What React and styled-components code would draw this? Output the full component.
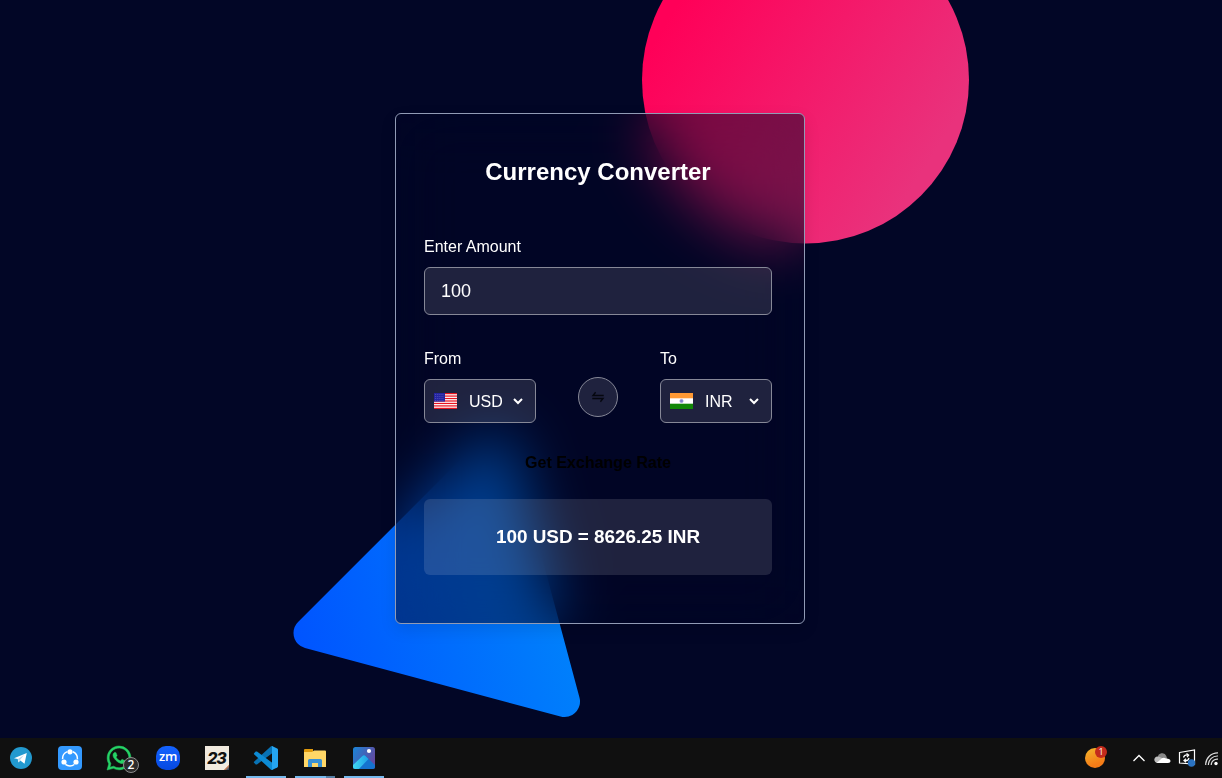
import React from "react";
import styled, { createGlobalStyle } from "styled-components";

const GlobalStyle = createGlobalStyle`
  * { box-sizing: border-box; }
  body { margin: 0; background: #020626; font-family: "Liberation Sans", Arial, sans-serif; color: #fff; overflow: hidden; }
`;

const Screen = styled.div`
  display: flex;
  flex-direction: column;
  width: 1222px;
  height: 778px;
  overflow: hidden;
`;

const Stage = styled.main`
  position: relative;
  flex: 1;
  padding: 113px 0 0 395px;
  background: #020626;
`;

const Shapes = styled.svg`
  position: absolute;
  inset: 0;
  width: 1222px;
  height: 738px;
`;

const Card = styled.section`
  position: relative;
  display: flex;
  flex-direction: column;
  width: 410px;
  height: 511px;
  padding: 42px 32px 0 28px;
  border: 1px solid #919bb5;
  border-radius: 6px;
  background: rgba(0, 4, 36, 0.5);
  backdrop-filter: blur(30px);
  box-shadow: 0 6px 16px rgba(0, 0, 0, 0.1);
`;

const Title = styled.h1`
  margin: 0 0 49px;
  font-size: 24px;
  line-height: 32px;
  text-align: center;
`;

const Label = styled.label`
  display: block;
  font-size: 16px;
  line-height: 20px;
`;

const Field = styled.div`
  display: flex;
  align-items: center;
  height: 48px;
  margin: 10px 0 34px;
  padding: 0 16px;
  border: 1px solid #868897;
  border-radius: 6px;
  background: rgba(255, 255, 255, 0.12);
  font-size: 18px;
`;

const Pair = styled.div`
  display: flex;
  justify-content: space-between;
`;

const Group = styled.div`
  display: flex;
  flex-direction: column;
  gap: 10px;
`;

const Select = styled.div`
  display: flex;
  align-items: center;
  width: 112px;
  height: 44px;
  padding: 0 11px 0 8px;
  border: 1px solid #868897;
  border-radius: 6px;
  background: rgba(255, 255, 255, 0.12);
  font-size: 16px;
`;

const Code = styled.span`
  padding-top: 2px;
`;

const Flag = styled.svg`
  width: 24px;
  height: 16px;
  margin-right: 12px;
`;

const Chevron = styled.svg`
  width: 12px;
  height: 8px;
  margin-left: auto;
`;

const Swap = styled.button`
  width: 40px;
  height: 40px;
  margin-top: 28px;
  padding: 0;
  border: 1px solid #868897;
  border-radius: 50%;
  background: rgba(255, 255, 255, 0.12);
  line-height: 0;
`;

const RateButton = styled.button`
  margin: 29px 0 26px;
  padding: 0;
  border: 0;
  background: none;
  color: #000;
  font: bold 16px/21px "Liberation Sans", Arial, sans-serif;
`;

const Result = styled.div`
  display: flex;
  align-items: center;
  justify-content: center;
  height: 76px;
  border-radius: 6px;
  background: rgba(255, 255, 255, 0.12);
  font-size: 18.9px;
  font-weight: bold;
`;

const Taskbar = styled.footer`
  display: flex;
  justify-content: space-between;
  height: 40px;
  background: #101010;
`;

const Apps = styled.div`
  display: flex;
  gap: 9px;
  padding-left: 1px;
`;

const TaskButton = styled.div`
  position: relative;
  display: flex;
  align-items: center;
  justify-content: center;
  width: 40px;
  height: 40px;
  border-bottom: 2px solid ${(p) => (p.$open ? "#76b9ed" : "transparent")};
  padding-top: 2px;
`;

const Stacked = styled.i`
  position: absolute;
  right: 0;
  bottom: -2px;
  width: 9px;
  height: 2px;
  background: #557fa5;
`;

const Icon = styled.svg`
  width: ${(p) => p.$w || 24}px;
  height: ${(p) => p.$h || p.$w || 24}px;
  overflow: visible;
`;

const Count = styled.span`
  position: absolute;
  left: 24px;
  top: 19px;
  width: 16px;
  height: 16px;
  border: 1px solid #8d8d8d;
  border-radius: 50%;
  background: #2c2c2c;
  font: 600 12px/14px "Open Sans", sans-serif;
  text-align: center;
`;

const Zoom = styled.div`
  display: flex;
  justify-content: center;
  width: 24px;
  height: 24px;
  border-radius: 10px;
  background: linear-gradient(#1463ff, #0748e0);
  font: 600 13px/21px "Open Sans", sans-serif;
  letter-spacing: -0.3px;
`;

const Day = styled.div`
  width: 24px;
  height: 24px;
  background: linear-gradient(135deg, #f1eadf 88%, #d08358 90%, #34506b 97%);
  color: #111;
  font: italic 800 16px/24px Inter, sans-serif;
  letter-spacing: -1.2px;
  text-indent: -1px;
  text-align: center;
`;

const Tray = styled.div`
  display: flex;
  align-items: center;
  width: 137px;
`;

const Weather = styled.div`
  position: relative;
  width: 20px;
  height: 20px;
  margin-right: 27px;
  border-radius: 50%;
  background: linear-gradient(160deg, #f3b72c, #f57c17 75%);
`;

const Alert = styled.span`
  position: absolute;
  left: 10px;
  top: -2px;
  width: 12px;
  height: 12px;
  border-radius: 50%;
  background: #c42b1c;
  font: 9px/12px "Open Sans", sans-serif;
  text-align: center;
`;

const TrayIcon = styled.svg`
  flex: none;
  width: ${(p) => p.$w}px;
  height: 18px;
  margin-right: ${(p) => p.$gap || 0}px;
`;

function Down() {
  return (
    <Chevron viewBox="0 0 12 8">
      <path d="M2 2 6 6l4-4" fill="none" stroke="#fff" strokeWidth="2" />
    </Chevron>
  );
}

function UsFlag() {
  return (
    <Flag viewBox="-1 0 24 16">
      <rect width="23" height="16" fill="#fff" />
      {[0, 1, 2, 3, 4, 5, 6].map((n) => (
        <rect key={n} y={n * 2.46} width="23" height="1.23" fill="#e8131f" />
      ))}
      <rect width="11" height="8.6" fill="#2424a0" />
      {[1.5, 3.5, 5.5, 7.5].map((y) => (
        <path key={y} d={`M1 ${y}h9.5`} stroke="#8585cf" strokeWidth=".6" strokeDasharray=".7 1.2" />
      ))}
    </Flag>
  );
}

function InFlag() {
  return (
    <Flag viewBox="-1 0 24 16">
      <rect width="23" height="16" fill="#fff" />
      <rect width="23" height="5.3" fill="#ff9933" />
      <rect y="10.7" width="23" height="5.3" fill="#128807" />
      <circle cx="11.5" cy="8" r="1.7" fill="#8080c8" stroke="#a0a0dc" strokeWidth=".6" />
    </Flag>
  );
}

export default function App() {
  return (
    <Screen>
      <GlobalStyle />
      <Stage>
        <Shapes viewBox="0 0 1222 738">
          <defs>
            <linearGradient id="pink" gradientUnits="userSpaceOnUse" x1="680" y1="0" x2="930" y2="160">
              <stop stopColor="#ff0058" />
              <stop offset="1" stopColor="#e9327c" />
            </linearGradient>
            <linearGradient id="blue" gradientUnits="userSpaceOnUse" x1="300" y1="640" x2="570" y2="560">
              <stop stopColor="#0055ff" />
              <stop offset="1" stopColor="#0084fb" />
            </linearGradient>
          </defs>
          <circle cx="805.5" cy="80" r="163.5" fill="url(#pink)" />
          <path d="M309 633 564.5 701.5 496 446Z" fill="url(#blue)" stroke="url(#blue)" strokeWidth="31" strokeLinejoin="round" />
        </Shapes>
        <Card>
          <Title>Currency Converter</Title>
          <Label>Enter Amount</Label>
          <Field>100</Field>
          <Pair>
            <Group>
              <Label>From</Label>
              <Select><UsFlag /><Code>USD</Code><Down /></Select>
            </Group>
            <Swap>
              <svg width="14" height="12" viewBox="0 0 14 12" fill="none" stroke="#05070f" strokeWidth="1.4">
                <path d="M12.7 4.5H2L4.6 1.2M1.3 7.5H12L9.4 10.8" />
              </svg>
            </Swap>
            <Group>
              <Label>To</Label>
              <Select><InFlag /><Code>INR</Code><Down /></Select>
            </Group>
          </Pair>
          <RateButton>Get Exchange Rate</RateButton>
          <Result>100 USD = 8626.25 INR</Result>
        </Card>
      </Stage>
      <Taskbar>
        <Apps>
          <TaskButton>
            <Icon $w={22} viewBox="0 0 22 22">
              <circle cx="11" cy="11" r="11" fill="#2299cf" />
              <path d="M4 11.2 16.8 6l-2.3 10.7-4.2-3.1-1.9 2-.7-3.5z" fill="#fff" />
              <path d="m8 12 6-4-4.2 5.2-.8 2z" fill="#b8d9ec" />
            </Icon>
          </TaskButton>
          <TaskButton>
            <Icon viewBox="0 0 24 24">
              <rect width="24" height="24" rx="4" fill="#3399ff" />
              <circle cx="12" cy="12.5" r="7.4" fill="none" stroke="#fff" strokeWidth="1.5" strokeDasharray="9.5 6" strokeDashoffset="-3" transform="rotate(-90 12 12.5)" />
              <g fill="#fff">
                <circle cx="12" cy="5.8" r="2.6" /><circle cx="6" cy="16" r="2.6" /><circle cx="18" cy="16" r="2.6" />
              </g>
            </Icon>
          </TaskButton>
          <TaskButton>
            <Icon viewBox="0 0 24 24">
              <path d="M17.47 14.38c-.3-.15-1.76-.87-2.03-.97-.27-.1-.47-.15-.67.15-.2.3-.77.97-.94 1.16-.17.2-.35.22-.64.08-.3-.15-1.26-.46-2.4-1.48-.88-.79-1.48-1.76-1.65-2.06-.17-.3-.02-.46.13-.6.13-.14.3-.35.45-.53.15-.17.2-.3.3-.5.1-.2.05-.37-.02-.52-.08-.15-.67-1.61-.92-2.21-.24-.58-.49-.5-.67-.51h-.57c-.2 0-.52.07-.79.37-.27.3-1.04 1.02-1.04 2.48s1.07 2.88 1.21 3.07c.15.2 2.1 3.2 5.08 4.49.71.3 1.26.49 1.69.63.71.22 1.36.19 1.87.11.57-.08 1.76-.72 2-1.41.25-.7.25-1.29.18-1.42-.07-.12-.27-.2-.57-.35zM12.05 21.79a9.87 9.87 0 0 1-5.03-1.38l-.36-.22-3.74.98 1-3.64-.24-.38a9.86 9.86 0 1 1 8.37 4.64zM20.46 3.49A11.82 11.82 0 0 0 12.05 0C5.5 0 .16 5.34.16 11.89c0 2.1.55 4.14 1.59 5.95L.06 24l6.3-1.65a11.88 11.88 0 0 0 5.69 1.45c6.55 0 11.89-5.34 11.89-11.9 0-3.17-1.24-6.16-3.48-8.41z" fill="#25d366" stroke="#25d366" strokeWidth=".5" />
            </Icon>
            <Count>2</Count>
          </TaskButton>
          <TaskButton><Zoom>zm</Zoom></TaskButton>
          <TaskButton><Day>23</Day></TaskButton>
          <TaskButton $open>
            <Icon viewBox="0 0 24 24">
              <path d="M0 15.7 17 .3q.8-.5 1.5-.2V7L3 18.4q-.7.4-1.3 0L.3 17q-.8-.6-.3-1.3z" fill="#0872b4" />
              <path d="M0 8.3Q-.4 7.6.3 7l1.4-1.4q.6-.4 1.3 0L18.5 17v6.9q-.7.3-1.5-.2z" fill="#0d8bd4" />
              <path d="M18 0l5.2 2.5q.8.4.8 1.3v16.4q0 .9-.8 1.3L18 24z" fill="#25a5f1" />
            </Icon>
          </TaskButton>
          <TaskButton $open>
            <Icon $w={22} $h={18} viewBox="0 0 22 18">
              <path d="M0 1q0-1 1-1h8v3H0z" fill="#e09a0c" />
              <path d="M0 3h8l2-1.5h11q1 0 1 1V18H0z" fill="#ffd767" />
              <path d="M4 18v-6.5Q4 10 5.5 10h11q1.500 0 1.500 1.500V18h-4v-4H8v4z" fill="#3a92d4" />
            </Icon>
            <Stacked />
          </TaskButton>
          <TaskButton $open>
            <Icon $w={22} viewBox="0 0 22 22">
              <defs>
                <linearGradient id="photo" x2="1" y2=".5"><stop stopColor="#1985d8" /><stop offset="1" stopColor="#624aa0" /></linearGradient>
                <linearGradient id="hill" x2="1" y2="0"><stop stopColor="#43dcf3" /><stop offset="1" stopColor="#1fa0e8" /></linearGradient>
                <clipPath id="frame"><rect width="22" height="22" rx="2.5" /></clipPath>
              </defs>
              <g clipPath="url(#frame)">
                <rect width="22" height="22" fill="url(#photo)" />
                <path d="M-1 20 9.5 9q1.500-1.500 3 0L23 19v4H-1z" fill="#1573cf" />
                <path d="M-1 19 9.5 9q1.500-1.500 3 0l3 3L5 23h-6z" fill="url(#hill)" />
                <circle cx="16" cy="4" r="2.1" fill="#fff" />
              </g>
            </Icon>
          </TaskButton>
        </Apps>
        <Tray>
          <Weather><Alert>1</Alert></Weather>
          <TrayIcon $w={14} $gap={8} viewBox="0 0 14 18">
            <path d="m1.5 12 5.5-5.5 5.5 5.5" fill="none" stroke="#fff" strokeWidth="1.3" />
          </TrayIcon>
          <TrayIcon $w={17} $gap={7} viewBox="0 0 17 18">
            <path d="M4 9a4.3 4.3 0 0 1 8.3-2l1.5 5H5z" fill="#888" />
            <path d="M3.7 14A3.3 3.3 0 1 1 5 7.7l8 3.3-1 3z" fill="#bdbdbd" />
            <path d="M2.5 14 6 11q3-3.500 6-1.500 4.500 0 4.500 2.800 0 1.700-2.500 1.700z" fill="#fff" />
          </TrayIcon>
          <TrayIcon $w={18} $gap={9} viewBox="0 0 18 18">
            <path d="m1.5 3.5 15-2.5v14l-15-1z" fill="none" stroke="#fff" strokeWidth="1.2" />
            <path d="M5.5 8.5q.8-3.3 5-2.5M8.5 4.5l2.2 1.6-1.7 2M11 9q-.8 3.3-4.5 2.5M8 9.8l-2 1.7 2 1.7" fill="none" stroke="#fff" strokeWidth="1.2" />
            <circle cx="13.5" cy="14" r="3.7" fill="#2b73c2" />
          </TrayIcon>
          <TrayIcon $w={13} viewBox="0 0 13 18">
            <g fill="none" stroke="#ddd" strokeWidth="1.2">
              <path d="M.7 16A12 12 0 0 1 13 3.8M3.4 16A9 9 0 0 1 13 7M6.2 16A6 6 0 0 1 13 10.2" />
            </g>
            <circle cx="11" cy="14.5" r="1.7" fill="#fff" />
          </TrayIcon>
        </Tray>
      </Taskbar>
    </Screen>
  );
}
